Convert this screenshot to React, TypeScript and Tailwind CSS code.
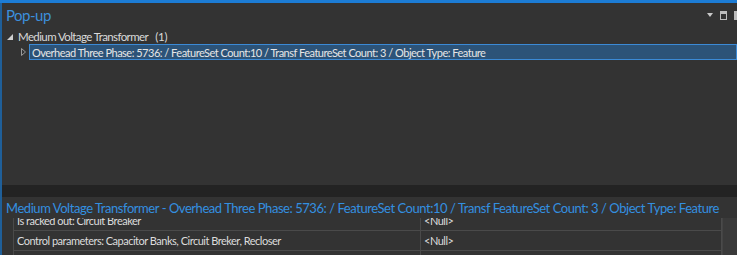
import React from 'react';

const rows = [
    { name: 'Is racked out: Circuit Breaker', value: '<Null>' },
    { name: 'Control parameters: Capacitor Banks, Circuit Breker, Recloser', value: '<Null>' },
    { name: '', value: '' },
];

function HeaderIcons() {
    return (
        <div className="flex items-center gap-[7px] -mr-[2px]">
            <svg width="6" height="4" viewBox="0 0 6 4">
                <path d="M0 0h6L3 4z" fill="#c8c8c8" />
            </svg>
            <svg width="7" height="9" viewBox="0 0 7 9">
                <rect x="0.5" y="0.5" width="6" height="8" fill="none" stroke="#bdbdbd" />
                <rect x="0" y="0" width="7" height="3" fill="#bdbdbd" />
            </svg>
            <svg width="5" height="9" viewBox="0 0 5 9">
                <rect x="0" y="0" width="5" height="9" fill="#bdbdbd" />
            </svg>
        </div>
    );
}

export default function App() {
    return (
        <div
            className="w-[737px] h-[255px] overflow-hidden bg-[#333333] flex flex-col"
            style={{ fontFamily: 'Lato, "Open Sans", sans-serif' }}
        >
            <div className="h-[3px] bg-[#1c7cd5] shrink-0" />
            <div className="flex flex-1 min-h-0">
                <div className="w-[2px] bg-[#1f5f99] shrink-0" />
                <div className="flex-1 flex flex-col min-w-0">
                    {/* header */}
                    <div className="h-[24px] flex items-center justify-between pl-[4px] shrink-0">
                        <span className="text-[15px] tracking-[-0.5px] text-[#3c8fdc] leading-none">Pop-up</span>
                        <HeaderIcons />
                    </div>

                    {/* tree */}
                    <div className="h-[158px] shrink-0 pt-[2px] text-[#dadada]">
                        <div className="h-[15px] flex items-center pl-[5px] gap-[5px] text-[11.5px] leading-none">
                            <svg width="6" height="6" viewBox="0 0 6 6">
                                <path d="M6 0v6H0z" fill="#cfcfcf" />
                            </svg>
                            <span className="tracking-[-0.6px]">Medium Voltage Transformer</span>
                            <span className="ml-[2px] tracking-[-0.2px]">(1)</span>
                        </div>
                        <div className="flex items-center h-[16px]">
                            <div className="w-[27px] flex justify-end pr-[3px]">
                                <svg width="5" height="8" viewBox="0 0 5 8">
                                    <path d="M0.5 0.5L4.5 4L0.5 7.5z" fill="none" stroke="#9a9a9a" />
                                </svg>
                            </div>
                            <div className="flex-1 h-[16px] bg-[#2c5378] border border-[#3b8ad6] flex items-center pl-[2px] leading-none text-[11px] tracking-[-0.5px] text-[#e6e6e6] whitespace-nowrap">
                                Overhead Three Phase: 5736: / FeatureSet Count:10 / Transf FeatureSet Count: 3 / Object Type: Feature
                            </div>
                        </div>
                    </div>

                    {/* splitter */}
                    <div className="h-[12px] bg-[#232323] shrink-0" />

                    {/* title */}
                    <div className="h-[21px] flex items-center pl-[4px] pt-[3px] pb-[2px] shrink-0 relative z-10 bg-[#333333]">
                        <span className="text-[13px] tracking-[-0.45px] text-[#3390e0] leading-none whitespace-nowrap">
                            Medium Voltage Transformer - Overhead Three Phase: 5736: / FeatureSet Count:10 / Transf FeatureSet Count: 3 / Object Type: Feature
                        </span>
                    </div>

                    {/* property grid */}
                    <div className="flex-1 min-h-0 flex overflow-hidden">
                        <div className="w-[11px] shrink-0" />
                        <div className="w-[709px] shrink-0 -mt-[7px] border-l border-[#4a4a4a] text-[11px] tracking-[-0.5px] text-[#dcdcdc]">
                            {rows.map((r, i) => (
                                <div key={i} className="grid grid-cols-[407px_1fr] h-[20px] border-b border-[#4a4a4a]">
                                    <div className="flex items-center pl-[3px] border-r border-[#4a4a4a] whitespace-nowrap leading-none">{r.name}</div>
                                    <div className="flex items-center pl-[3px] border-r border-[#4a4a4a] leading-none">{r.value}</div>
                                </div>
                            ))}
                        </div>
                        <div className="flex-1 bg-[#3a3a3a] border-l border-[#444]" />
                    </div>
                </div>
            </div>
        </div>
    );
}
